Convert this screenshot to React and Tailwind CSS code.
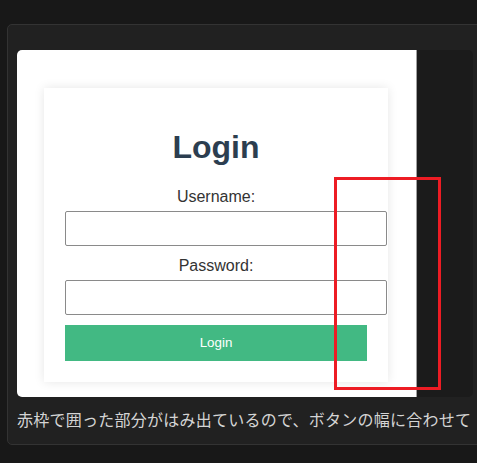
export default function App() {
  return (
    <div className="w-[477px] h-[463px] overflow-hidden bg-[#181818] pt-[24px] pl-[7px]" style={{ fontFamily: '"Liberation Sans", Arial, sans-serif' }}>
      <div className="w-[490px] h-[421px] rounded-[5px] border border-[#333333] bg-[#212121] pl-[9px] pt-[25px] overflow-hidden">
        <div className="relative w-[456px] h-[347px] rounded-[5px] overflow-hidden flex bg-[#1b1b1b]">
          <div className="w-[400px] shrink-0 h-full bg-white pl-[27px] pt-[38px] border-r border-[#a0a0a0]">
            <div className="w-[344px] h-[294px] bg-white shadow-[0_0_10px_rgba(0,0,0,0.1)] pt-[41px] pl-[21px] flex flex-col">
              <h2 className="w-[302px] text-center text-[32px] leading-[37px] font-bold text-[#2c3e50]">Login</h2>
              <div className="w-[302px] mt-[22px] text-center text-[16px] leading-[18px] text-[#333333]">Username:</div>
              <div className="mt-[5px] w-[322px] h-[35px] border border-[#8a8a8a] rounded-[2px] bg-white"></div>
              <div className="w-[302px] mt-[11px] text-center text-[16px] leading-[18px] text-[#333333]">Password:</div>
              <div className="mt-[5px] w-[322px] h-[35px] border border-[#8a8a8a] rounded-[2px] bg-white"></div>
              <div className="mt-[10px] w-[302px] h-[36px] bg-[#42b983] text-white text-[13.33px] flex items-center justify-center">Login</div>
            </div>
          </div>
          <div className="absolute left-[317px] top-[127px] w-[107px] h-[213px] border-[3px] border-[#ed1c24]"></div>
        </div>
        <div className="mt-[10px] text-[16px] leading-[24px] tracking-[0.25px] text-[#d4d4d4] whitespace-nowrap" style={{ fontFamily: '"Noto Sans CJK JP", sans-serif' }}>
          赤枠で囲った部分がはみ出ているので、ボタンの幅に合わせて
        </div>
      </div>
    </div>
  );
}
